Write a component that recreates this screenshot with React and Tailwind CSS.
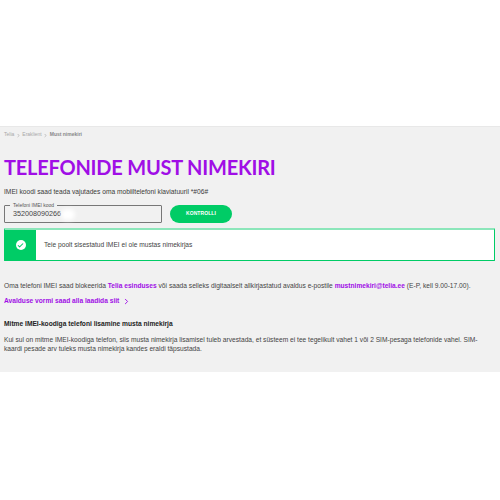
import { Check, ChevronRight } from "lucide-react";

export default function App() {
  return (
    <div className="w-[500px] h-[500px] bg-white font-['Liberation_Sans',sans-serif] overflow-hidden">
      <div className="h-[126px] bg-white" />

      <main className="h-[246px] bg-[#f1f1f1] border-t border-[#e8e8e8] px-1">
        {/* Breadcrumb */}
        <nav className="h-[14px] mt-[1px] flex items-center gap-[1.5px] text-[5px] text-[#a8a8a8]">
          <span>Telia</span>
          <ChevronRight size={5} className="text-[#808080]" />
          <span>Eraklient</span>
          <ChevronRight size={5} className="text-[#808080]" />
          <span className="font-bold text-[#888]">Must nimekiri</span>
        </nav>

        <h1 className="mt-[11px] text-[20px] leading-[28px] font-bold text-[#a00ee6] font-['Lato',sans-serif] tracking-[-0.22px]">
          TELEFONIDE MUST NIMEKIRI
        </h1>

        <p className="mt-[6px] text-[6.65px] leading-[10px] text-[#3a3a3a]">
          IMEI koodi saad teada vajutades oma mobiiltelefoni klaviatuuril *#06#
        </p>

        {/* IMEI form */}
        <div className="mt-[8px] flex items-center gap-2">
          <div className="relative w-[158px] h-[18px] border border-[#777] rounded-[1px] flex items-center pl-2 text-[7.2px] text-[#444]">
            <span className="absolute -top-[4px] left-[5px] px-[3px] bg-[#f1f1f1] text-[5px] leading-[7px] text-[#555]">
              Telefoni IMEI kood
            </span>
            <span>352008090266</span>
            <span className="absolute left-[56px] top-[3px] w-[14px] h-[11px] rounded-full bg-white blur-[2px]" />
          </div>
          <button className="w-[62px] h-[18px] rounded-full bg-[#00cc66] text-white text-[5px] font-bold tracking-[0.1px]">
            KONTROLLI
          </button>
        </div>

        {/* Result */}
        <div className="mt-[5px] w-[491px] h-[33px] flex bg-white border border-[#00cc66] border-t-2 border-t-[#8ce6ba] rounded-[1px]">
          <div className="w-[31px] bg-[#00cc66] flex items-center justify-center">
            <div className="w-[10px] h-[10px] rounded-full bg-white flex items-center justify-center">
              <Check size={7} strokeWidth={3.5} className="text-[#00cc66]" />
            </div>
          </div>
          <p className="ml-[8px] self-center text-[6.65px] text-[#444]">
            Teie poolt sisestatud IMEI ei ole mustas nimekirjas
          </p>
        </div>

        <p className="mt-[20px] text-[6.65px] leading-[10px] text-[#444]">
          Oma telefoni IMEI saad blokeerida <span className="font-bold text-[#a00ee6]">Telia esinduses</span> või saada selleks digitaalselt allkirjastatud avaldus e-postile <span className="font-bold text-[#a00ee6]">mustnimekiri@telia.ee</span> (E-P, kell 9.00-17.00).
        </p>

        <div className="mt-[5px] flex items-center gap-[3px] text-[6.65px] leading-[10px] font-bold text-[#a00ee6]">
          <span>Avalduse vormi saad alla laadida siit</span>
          <ChevronRight size={9} strokeWidth={2.5} />
        </div>

        <h2 className="mt-[13px] text-[6.65px] leading-[10px] font-bold text-[#222]">
          Mitme IMEI-koodiga telefoni lisamine musta nimekirja
        </h2>

        <p className="mt-[6px] w-[490px] text-[6.65px] leading-[9px] text-[#444]">
          Kui sul on mitme IMEI-koodiga telefon, siis musta nimekirja lisamisel tuleb arvestada, et süsteem ei tee tegelikult vahet 1 või 2 SIM-pesaga telefonide vahel. SIM-kaardi pesade arv tuleks musta nimekirja kandes eraldi täpsustada.
        </p>
      </main>
    </div>
  );
}
